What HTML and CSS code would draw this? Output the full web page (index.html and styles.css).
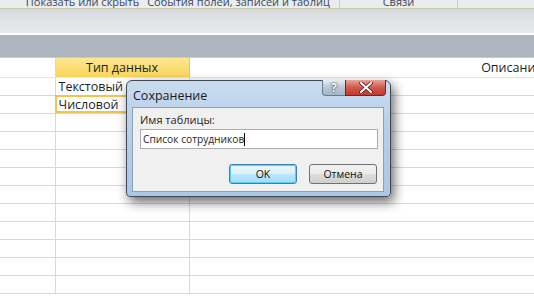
FILE: index.html
```html
<!DOCTYPE html>
<html lang="ru">
<head>
  <meta charset="UTF-8">
  <title>Сохранение</title>
  <link rel="stylesheet" href="styles.css">
</head>
<body>
  <div class="ribbon">
    <div class="groups">
      <span class="group g-first"></span>
      <span class="group g-show">Показать или скрыть</span>
      <span class="group g-events">События полей, записей и таблиц</span>
      <span class="group g-links">Связи</span>
      <span class="group g-rest"></span>
    </div>
    <div class="ribbon-bottom"></div>
  </div>
  <div class="band"></div>

  <div class="grid-wrap">
    <table class="grid">
      <thead>
        <tr>
          <th class="c-sel"></th>
          <th class="c-type active">Тип данных</th>
          <th class="c-desc">Описание</th>
        </tr>
      </thead>
      <tbody>
        <tr><td></td><td>Текстовый</td><td></td></tr>
        <tr><td></td><td class="current">Числовой</td><td></td></tr>
        <tr><td></td><td></td><td></td></tr>
        <tr><td></td><td></td><td></td></tr>
        <tr><td></td><td></td><td></td></tr>
        <tr><td></td><td></td><td></td></tr>
        <tr><td></td><td></td><td></td></tr>
        <tr><td></td><td></td><td></td></tr>
        <tr><td></td><td></td><td></td></tr>
        <tr><td></td><td></td><td></td></tr>
        <tr><td></td><td></td><td></td></tr>
        <tr><td></td><td></td><td></td></tr>
      </tbody>
    </table>
  </div>

  <!-- модальное окно поверх таблицы -->
  <div class="dialog">
    <div class="titlebar">
      <span class="title">Сохранение</span>
      <div class="caption-btns">
        <span class="cap help">?</span>
        <span class="cap close">
          <svg width="14" height="11" viewBox="0 0 14 11">
            <path d="M2 1 L12 10 M12 1 L2 10" stroke="#5a1a1a" stroke-width="3.6" stroke-linecap="round"/>
            <path d="M2 1 L12 10 M12 1 L2 10" stroke="#fff" stroke-width="2" stroke-linecap="round"/>
          </svg>
        </span>
      </div>
    </div>
    <div class="body">
      <label class="field-label">Имя таблицы:</label>
      <div class="input">Список сотрудников<span class="caret"></span></div>
      <div class="buttons">
        <button class="btn default">OK</button>
        <button class="btn">Отмена</button>
      </div>
    </div>
  </div>
</body>
</html>
```

FILE: styles.css
```css
* {
  box-sizing: border-box;
}

body {
  margin: 0;
  width: 534px;
  height: 297px;
  overflow: hidden;
  background: #fff;
  font-family: "Open Sans", "Noto Sans", sans-serif;
  color: #1e1e1e;
  position: relative;
}

/* ribbon */
.ribbon {
  height: 35px;
  background: linear-gradient(#dcdfe4, #e4e6ea);
  border-bottom: 2px solid #fdfdfd;
}

.groups {
  display: flex;
  height: 8px;
  background: #e9ecf0;
  overflow: hidden;
}

.group {
  display: flex;
  align-items: flex-end;
  justify-content: center;
  height: 8px;
  font-size: 11px;
  line-height: 12px;
  white-space: nowrap;
  color: #3d4a5c;
  border-right: 1px solid #d9d39a;
}

.g-first { width: 28px; }
.g-show { width: 110px; }
.g-events { width: 202px; }
.g-links { width: 118px; }
.g-rest { flex: 1; border-right: 0; }

.ribbon-bottom {
  height: 25px;
  background: linear-gradient(#d5d8dd, #e2e4e8 60%, #e6e8eb);
  border-top: 1px solid #c9c9a4;
}

.band {
  height: 23px;
  background: #adb5bf;
  border-bottom: 1px solid #c3c9d1;
}

/* grid */
.grid-wrap {
  width: 534px;
  overflow: hidden;
}

.grid {
  border-collapse: collapse;
  width: 835px;
  table-layout: fixed;
  font-size: 12.5px;
}

.grid th,
.grid td {
  height: 18px;
  padding: 0 3px;
  border: 1px solid #d3d9e3;
  border-top: 0;
  text-align: left;
  white-space: nowrap;
  overflow: hidden;
}

.grid th {
  height: 19px;
  font-weight: normal;
  border-bottom: 1px solid #e1e5ec;
}

.c-sel { width: 55px; }
.c-type { width: 134px; }

.grid th.active {
  text-align: center;
  background: linear-gradient(#fce690, #f9d65a);
  border-right-color: #e9c45c;
}

.grid th.c-desc {
  text-align: center;
}

.grid th { border-left: 0; }

.grid td:first-child { border-left: 0; }

.grid td.current {
  outline: 2px solid #f2c44c;
  outline-offset: -2px;
}

/* dialog */
.dialog {
  position: absolute;
  left: 126px;
  top: 80px;
  width: 265px;
  height: 117px;
  border: 1px solid #3f4a56;
  border-radius: 6px 6px 4px 4px;
  background: linear-gradient(#c9dcef, #b7cfe8 40%, #aac7e6);
  box-shadow: 3px 5px 12px rgba(0, 0, 0, 0.6);
  padding: 0 6px 4px 5px;
  display: flex;
  flex-direction: column;
}

.titlebar {
  height: 26px;
  display: flex;
  align-items: flex-start;
  justify-content: space-between;
}

.title {
  font-size: 12.5px;
  margin: 6px 0 0 1px;
  color: #1a1a1a;
}

.caption-btns {
  display: flex;
  margin-right: -2px;
  margin-top: -1px;
}

.cap {
  display: flex;
  align-items: center;
  justify-content: center;
  height: 16px;
  border: 1px solid #6c7a8a;
  border-top: 0;
}

.help {
  width: 23px;
  border-radius: 0 0 0 4px;
  background: linear-gradient(#e6edf5, #b9c6d5 50%, #a8b7c9);
  color: #fff;
  font-weight: bold;
  font-size: 12px;
  text-shadow: 0 0 2px #34404e, 0 0 1px #34404e;
  border-right: 0;
}

.close {
  width: 41px;
  border-radius: 0 0 4px 0;
  background: linear-gradient(#e8a39a, #d0584c 50%, #c4382b);
  border-color: #6b2a25;
}

.body {
  flex: 1;
  background: #f0f0f0;
  border: 1px solid #8aa1b9;
  padding: 6px 0 0 7px;
  display: flex;
  flex-direction: column;
}

.field-label {
  font-size: 11px;
  line-height: 12px;
  margin-bottom: 3px;
}

.input {
  height: 20px;
  background: #fff;
  border: 1px solid #abadb3;
  font-size: 10.2px;
  line-height: 18px;
  padding-left: 2px;
  margin-right: 5px;
}

.caret {
  display: inline-block;
  width: 1px;
  height: 13px;
  background: #000;
  vertical-align: -3px;
}

.buttons {
  display: flex;
  justify-content: flex-end;
  gap: 12px;
  margin-top: 15px;
  margin-right: 6px;
}

.btn {
  width: 68px;
  height: 20px;
  font-family: inherit;
  font-size: 10.5px;
  color: #111;
  border: 1px solid #707070;
  border-radius: 3px;
  background: linear-gradient(#f2f2f2, #ebebeb 50%, #dddddd 51%, #cfcfcf);
  padding: 0;
}

.btn.default {
  border-color: #3c7fb1;
  background: linear-gradient(#eaf6fd, #d9f0fc 50%, #bee6fd 51%, #a7d9f5);
  box-shadow: inset 0 0 0 1px #55d2f2;
}
```
